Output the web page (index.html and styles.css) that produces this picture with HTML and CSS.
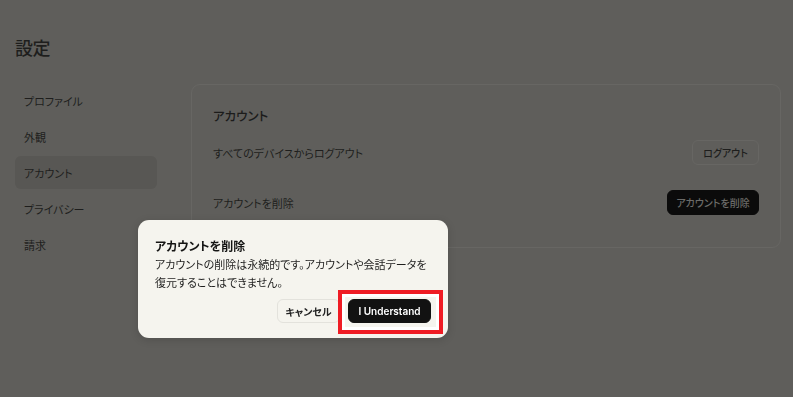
FILE: index.html
```html
<!DOCTYPE html>
<html lang="ja">
<head>
<meta charset="utf-8">
<title>設定</title>
<link rel="stylesheet" href="styles.css">
</head>
<body>
<div class="page">
  <h1 class="title">設定</h1>
  <div class="layout">
    <nav class="sidebar">
      <div class="nav-item">プロファイル</div>
      <div class="nav-item">外観</div>
      <div class="nav-item active">アカウント</div>
      <div class="nav-item">プライバシー</div>
      <div class="nav-item">請求</div>
    </nav>
    <section class="card">
      <h2 class="card-title">アカウント</h2>
      <div class="row row-first">
        <span class="row-label">すべてのデバイスからログアウト</span>
        <button class="btn btn-outline">ログアウト</button>
      </div>
      <div class="row row-second">
        <span class="row-label">アカウントを削除</span>
        <button class="btn btn-dark">アカウントを削除</button>
      </div>
    </section>
  </div>
</div>

<div class="modal">
  <h3 class="modal-title">アカウントを削除</h3>
  <p class="modal-body">アカウントの削除は永続的です。アカウントや会話データを復元することはできません。</p>
  <div class="modal-actions">
    <button class="mbtn mbtn-cancel">キャンセル</button>
    <button class="mbtn mbtn-confirm">I Understand</button>
  </div>
  <div class="highlight"></div>
</div>
</body>
</html>
```

FILE: styles.css
```css
* { box-sizing: border-box; }

html, body {
  margin: 0;
  padding: 0;
  height: 100%;
}

body {
  background: #5f5e5b;
  font-family: "Noto Sans CJK JP", "Noto Sans", sans-serif;
  font-feature-settings: "palt";
  color: #1c1c1b;
  overflow: hidden;
}

.page {
  padding: 36px 12px 0 15px;
}

.title {
  margin: 0 0 22px 0;
  font-family: "Liberation Serif", "Noto Sans CJK JP", serif;
  font-size: 18px;
  font-weight: 500;
  line-height: 26px;
  color: #1e1e1d;
  letter-spacing: -0.5px;
}

.layout {
  display: grid;
  grid-template-columns: 142px 590px;
  column-gap: 34px;
  align-items: start;
}

.sidebar {
  display: flex;
  flex-direction: column;
  gap: 3px;
}

.nav-item {
  height: 33px;
  display: flex;
  align-items: center;
  padding-left: 9px;
  font-size: 11px;
  color: #1e1e1d;
  border-radius: 6px;
}

.nav-item.active {
  background: #585754;
}

.card {
  border: 1px solid #676663;
  border-radius: 9px;
  padding: 21px 21px 32px 21px;
}

.card-title {
  margin: 0;
  font-size: 12.5px;
  font-weight: 500;
  line-height: 20px;
  color: #1c1c1b;
}

.row {
  display: flex;
  align-items: center;
  justify-content: space-between;
}

.row-first { margin-top: 14px; }
.row-second { margin-top: 25px; }

.row-label {
  font-size: 11px;
  color: #1e1e1d;
}

.btn {
  height: 25px;
  border-radius: 6px;
  font-family: inherit;
  font-feature-settings: "palt";
  font-size: 10px;
  font-weight: 500;
  padding: 0;
  text-align: center;
  white-space: nowrap;
  cursor: pointer;
}

.btn-outline {
  width: 67px;
  background: #5f5e5b;
  border: 1px solid #676663;
  color: #1e1e1d;
}

.btn-dark {
  width: 92px;
  background: #0b0b0b;
  border: 1px solid #0b0b0b;
  color: #6b6b69;
}

.modal {
  position: fixed;
  left: 138px;
  top: 220px;
  width: 310px;
  height: 118px;
  background: #f5f4ee;
  border-radius: 11px;
  padding: 17px 17px 0 17px;
  box-shadow: 0 2px 8px rgba(0, 0, 0, 0.15);
}

.modal-title {
  margin: 0;
  font-size: 12px;
  font-weight: 700;
  line-height: 18px;
  color: #151514;
}

.modal-body {
  margin: 0;
  font-size: 11px;
  line-height: 18px;
  color: #1e1e1d;
}

.modal-actions {
  display: flex;
  justify-content: flex-end;
  gap: 8px;
  margin-top: 8px;
}

.mbtn {
  height: 24px;
  padding: 0;
  border-radius: 6px;
  font-family: "Noto Sans CJK JP", "Noto Sans", sans-serif;
  font-feature-settings: "palt";
  font-size: 10px;
  font-weight: 700;
  white-space: nowrap;
  cursor: pointer;
}

.mbtn-cancel {
  width: 63px;
  background: #f5f4ee;
  border: 1px solid #e3e2dc;
  color: #222;
}

.mbtn-confirm {
  width: 83px;
  background: #121212;
  border: 1px solid #121212;
  color: #fff;
  font-family: "Inter", "Noto Sans", sans-serif;
  font-size: 10px;
  font-weight: 600;
}

.highlight {
  position: absolute;
  left: 200px;
  top: 70px;
  width: 105px;
  height: 44px;
  border: 4px solid #ef1c24;
  box-shadow: inset 0 0 0 3px #ffffff;
  pointer-events: none;
}
```
